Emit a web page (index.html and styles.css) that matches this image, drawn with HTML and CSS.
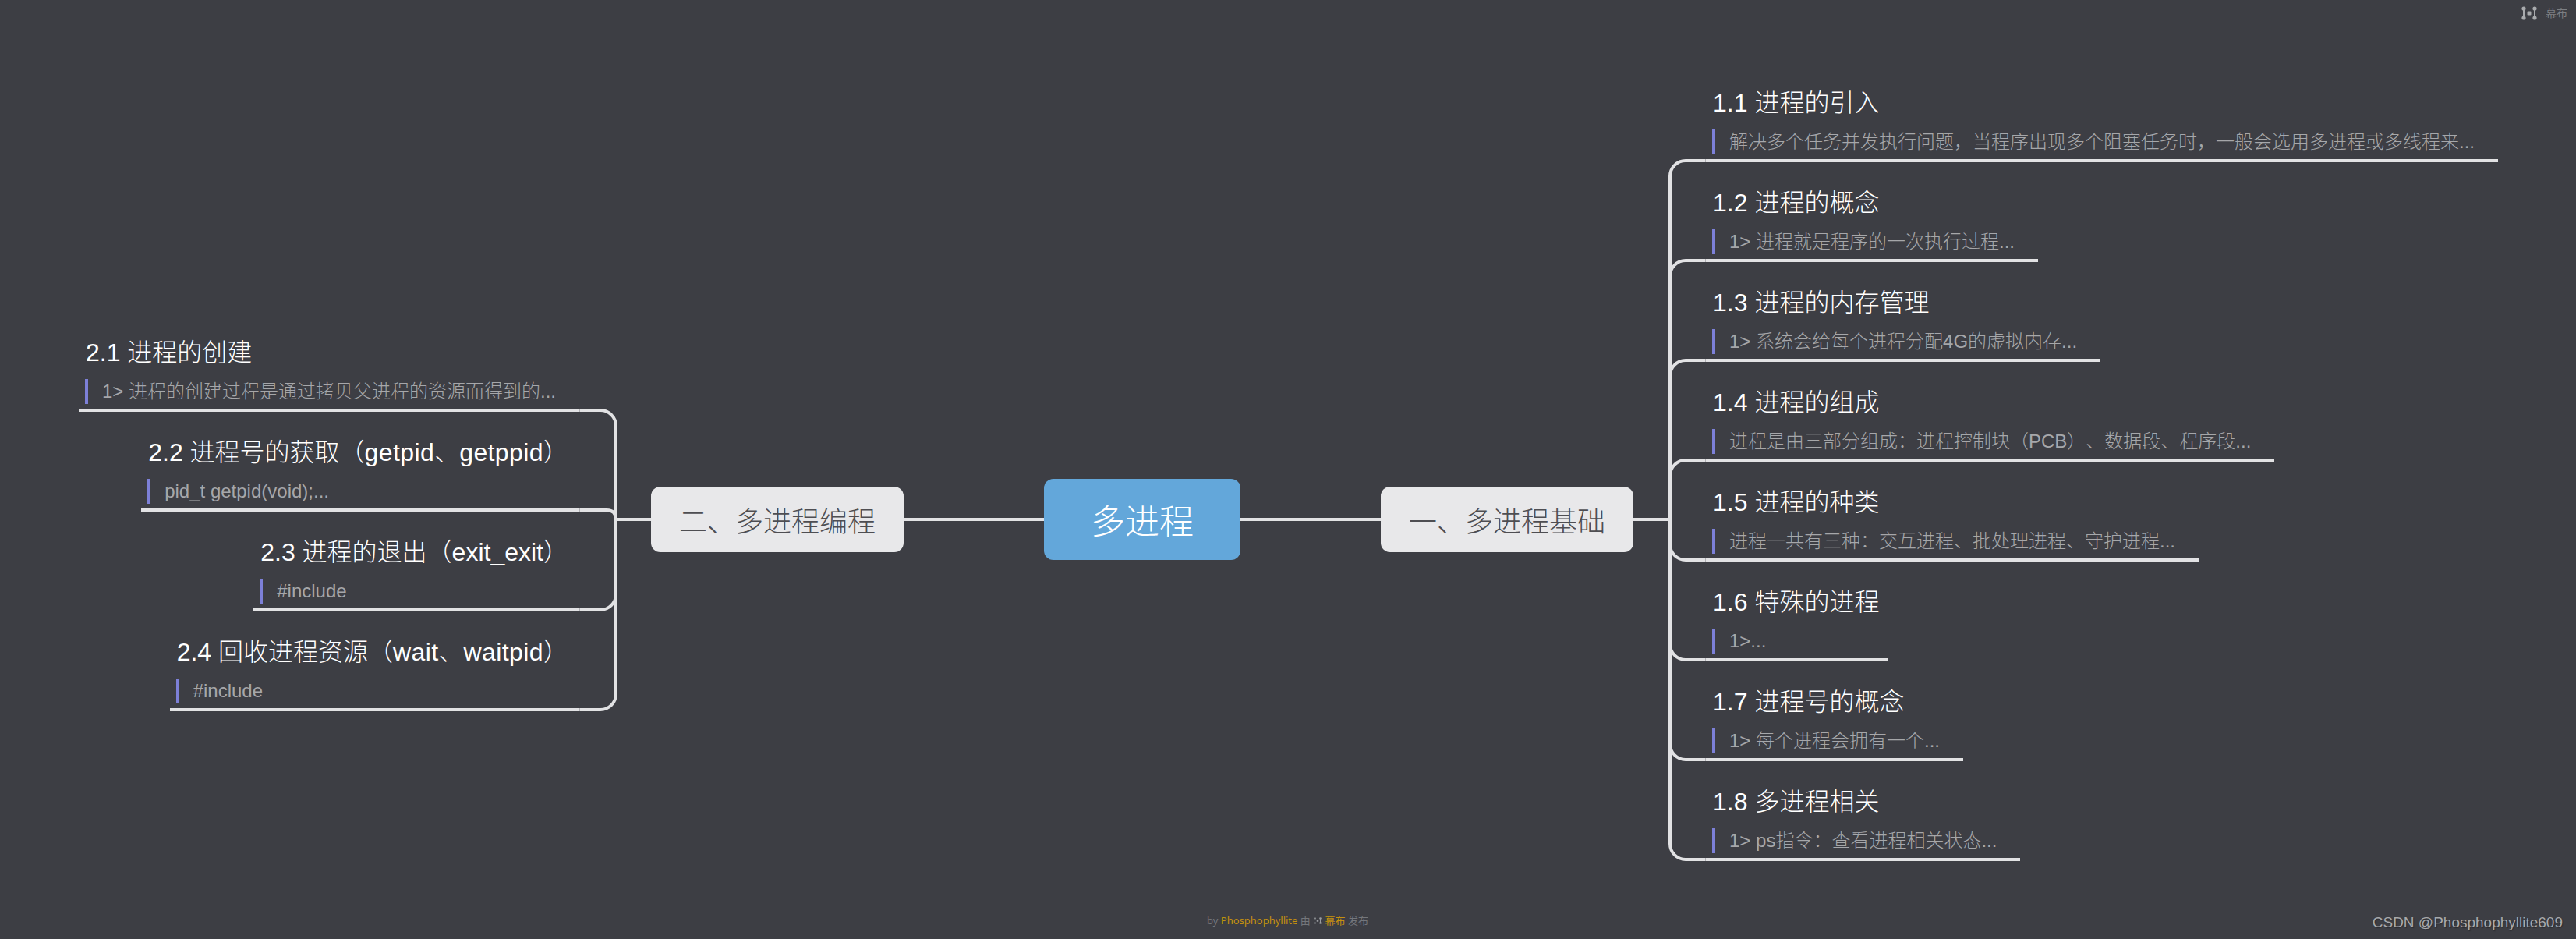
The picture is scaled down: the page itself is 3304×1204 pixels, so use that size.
FILE: index.html
```html
<!DOCTYPE html>
<html lang="zh-CN">
<head>
<meta charset="utf-8">
<title>多进程</title>
<link rel="stylesheet" href="styles.css">
</head>
<body>
<main class="map">
  <section class="branch branch-left">
    <article class="item"><h3 class="title">2.1 进程的创建</h3><p class="note">1&gt; 进程的创建过程是通过拷贝父进程的资源而得到的...</p></article>
    <article class="item"><h3 class="title">2.2 进程号的获取（<span class="latin">getpid</span>、<span class="latin">getppid</span>）</h3><p class="note">pid_t getpid(void);...</p></article>
    <article class="item"><h3 class="title">2.3 进程的退出（exit_exit）</h3><p class="note">#include</p></article>
    <article class="item"><h3 class="title">2.4 回收进程资源（<span class="latin">wait</span>、<span class="latin">waitpid</span>）</h3><p class="note">#include</p></article>
  </section>

  <svg class="wires wires-left" width="92" height="1204" viewBox="0 0 92 1204" aria-hidden="true">
    <path d="M92 666H47"/>
    <path d="M47 666V546A20 20 0 0 0 27 526H0.3"/>
    <path d="M47 666Q47 654 35 654H0.3"/>
    <path d="M47 666V762A20 20 0 0 1 27 782H0.3"/>
    <path d="M47 666V890A20 20 0 0 1 27 910H0.3"/>
  </svg>

  <section class="hub">
    <div class="node">二、多进程编程</div>
    <span class="link link-wide"></span>
    <div class="root">多进程</div>
    <span class="link link-wider"></span>
    <div class="node">一、多进程基础</div>
  </section>

  <svg class="wires wires-right" width="93" height="1204" viewBox="0 0 93 1204" aria-hidden="true">
    <path d="M0 666H47"/>
    <path d="M47 666V226A20 20 0 0 1 67 206H92.7"/>
    <path d="M47 666V354A20 20 0 0 1 67 334H92.7"/>
    <path d="M47 666V482A20 20 0 0 1 67 462H92.7"/>
    <path d="M47 666V610A20 20 0 0 1 67 590H92.7"/>
    <path d="M47 666V698A20 20 0 0 0 67 718H92.7"/>
    <path d="M47 666V826A20 20 0 0 0 67 846H92.7"/>
    <path d="M47 666V954A20 20 0 0 0 67 974H92.7"/>
    <path d="M47 666V1082A20 20 0 0 0 67 1102H92.7"/>
  </svg>

  <section class="branch branch-right">
    <article class="item"><h3 class="title">1.1 进程的引入</h3><p class="note">解决多个任务并发执行问题，当程序出现多个阻塞任务时，一般会选用多进程或多线程来...</p></article>
    <article class="item"><h3 class="title">1.2 进程的概念</h3><p class="note">1&gt; 进程就是程序的一次执行过程...</p></article>
    <article class="item"><h3 class="title">1.3 进程的内存管理</h3><p class="note">1&gt; 系统会给每个进程分配4G的虚拟内存...</p></article>
    <article class="item"><h3 class="title">1.4 进程的组成</h3><p class="note">进程是由三部分组成：进程控制块（PCB）、数据段、程序段...</p></article>
    <article class="item"><h3 class="title">1.5 进程的种类</h3><p class="note">进程一共有三种：交互进程、批处理进程、守护进程...</p></article>
    <article class="item"><h3 class="title">1.6 特殊的进程</h3><p class="note">1&gt;...</p></article>
    <article class="item"><h3 class="title">1.7 进程号的概念</h3><p class="note">1&gt; 每个进程会拥有一个...</p></article>
    <article class="item"><h3 class="title">1.8 多进程相关</h3><p class="note">1&gt; ps指令：查看进程相关状态...</p></article>
  </section>
</main>

<div class="brand">
  <svg class="mubu mubu-large" viewBox="0 0 20 18" aria-hidden="true"><use href="#mubu-mark"/></svg>
  <span>幕布</span>
</div>

<footer class="credit">
  <span>by</span> <span class="accent">Phosphophyllite</span> <span>由</span>
  <svg class="mubu mubu-small" viewBox="0 0 20 18" aria-hidden="true">
    <g id="mubu-mark">
      <circle cx="3" cy="3" r="2.6"/><circle cx="3" cy="15" r="2.6"/>
      <circle cx="17" cy="3" r="2.6"/><circle cx="17" cy="15" r="2.6"/>
      <rect x="2" y="3" width="2" height="12"/><rect x="16" y="3" width="2" height="12"/>
      <rect x="7.5" y="6.5" width="5" height="5" rx="1"/>
    </g>
  </svg>
  <span class="accent">幕布</span> <span>发布</span>
</footer>

<div class="watermark">CSDN @Phosphophyllite609</div>
</body>
</html>
```
FILE: styles.css
```css
* { box-sizing: border-box; }
html, body { margin: 0; padding: 0; }
body {
  width: 3304px;
  height: 1204px;
  overflow: hidden;
  position: relative;
  background: #3d3e44;
  font-family: "Liberation Sans", "Noto Sans CJK SC", sans-serif;
  text-spacing-trim: space-all;
}
.map {
  display: flex;
  align-items: flex-start;
  height: 1204px;
  padding-left: 100px;
}
.branch { display: flex; flex-direction: column; }
.branch-left { width: 643px; padding-top: 400px; align-items: flex-end; }
.branch-right { padding-top: 80px; align-items: flex-start; }

.item {
  height: 128px;
  padding: 32px 0 0 8px;
  border-bottom: 4px solid #e2e2e4;
  display: flex;
  flex-direction: column;
  align-items: flex-start;
}
.title {
  margin: 0 0 14px;
  padding: 0 11px 0 1px;
  font-size: 32px;
  font-weight: 300;
  line-height: 40px;
  color: #fff;
  white-space: nowrap;
}
.branch-left .title { padding-right: 14px; }
.latin { letter-spacing: 0.4px; }
.note {
  margin: 0;
  padding: 0 30px 0 18px;
  border-left: 4px solid #7d80d8;
  font-size: 24px;
  font-weight: 300;
  line-height: 32px;
  color: #a6a7aa;
  white-space: nowrap;
}

.wires { flex: none; display: block; }
.wires path { fill: none; stroke: #e2e2e4; stroke-width: 4; }

.hub {
  display: flex;
  align-items: center;
  width: 1260px;
  margin-top: 614px;
  flex: none;
}
.node, .root {
  display: flex;
  align-items: center;
  justify-content: center;
  flex: none;
  border-radius: 12px;
  font-weight: 300;
  white-space: nowrap;
}
.node {
  width: 324px;
  height: 84px;
  background: #e8e8ea;
  color: #4e4e52;
  font-size: 36px;
}
.root {
  width: 252px;
  height: 104px;
  background: #63a7da;
  color: #fff;
  font-size: 44px;
}
.link { height: 4px; background: #e2e2e4; flex: none; }
.link-wide { width: 180px; }
.link-wider { width: 180px; }

.brand {
  position: absolute;
  top: 8px;
  right: 11px;
  display: flex;
  align-items: center;
  gap: 11px;
  font-size: 14px;
  line-height: 18px;
  color: #7c7e83;
}
.mubu { display: inline-block; fill: currentColor; }
.mubu-large { width: 20px; height: 18px; color: #a9abae; }
.mubu-small { width: 10px; height: 9px; margin: 0 1px; color: #9a9ca0; }

.credit {
  position: absolute;
  left: 1548px;
  top: 1170px;
  font-family: "Noto Sans", "Noto Sans CJK SC", sans-serif;
  font-size: 13px;
  line-height: 20px;
  color: #74767b;
  white-space: nowrap;
}
.accent { color: #c4900f; }

.watermark {
  position: absolute;
  right: 17px;
  bottom: 9px;
  font-size: 19px;
  line-height: 24px;
  color: #a8a9ac;
  text-shadow: 1px 1px 1px #2c2d31;
  white-space: nowrap;
}
```
